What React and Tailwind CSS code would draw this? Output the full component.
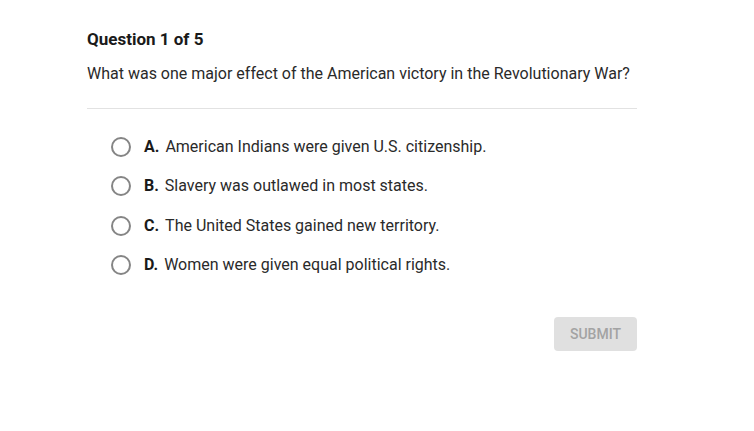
export default function App() {
  const options = [
    ["A.", "American Indians were given U.S. citizenship."],
    ["B.", "Slavery was outlawed in most states."],
    ["C.", "The United States gained new territory."],
    ["D.", "Women were given equal political rights."],
  ];
  return (
    <div className="w-[754px] h-[431px] bg-white" style={{ fontFamily: "Roboto, 'Liberation Sans', sans-serif" }}>
      <div className="ml-[87px] w-[550px] pt-[27px]">
        <div className="text-[17px] leading-[24px] font-bold text-[#1a1a1a]">Question 1 of 5</div>
        <div className="mt-[11px] text-[16px] leading-[24px] text-[#2a2a2a]">
          What was one major effect of the American victory in the Revolutionary War?
        </div>
        <div className="mt-[22px] h-px bg-[#e2e2e2]" />
        <div className="mt-[18px] flex flex-col">
          {options.map(([l, t]) => (
            <div key={l} className="h-[39.5px] flex items-center pl-[24px]">
              <div className="w-[20px] h-[20px] rounded-full border-2 border-[#858585] shrink-0" />
              <span className="ml-[13px] text-[16px] font-bold text-[#1a1a1a]">{l}</span>
              <span className="ml-[6px] text-[16px] text-[#2a2a2a]">{t}</span>
            </div>
          ))}
        </div>
        <div className="mt-[32px] flex justify-end">
          <div className="w-[83px] h-[34px] rounded-[4px] bg-[#e0e0e0] flex items-center justify-center text-[14px] font-medium text-[#a3a3a3]">
            SUBMIT
          </div>
        </div>
      </div>
    </div>
  );
}
